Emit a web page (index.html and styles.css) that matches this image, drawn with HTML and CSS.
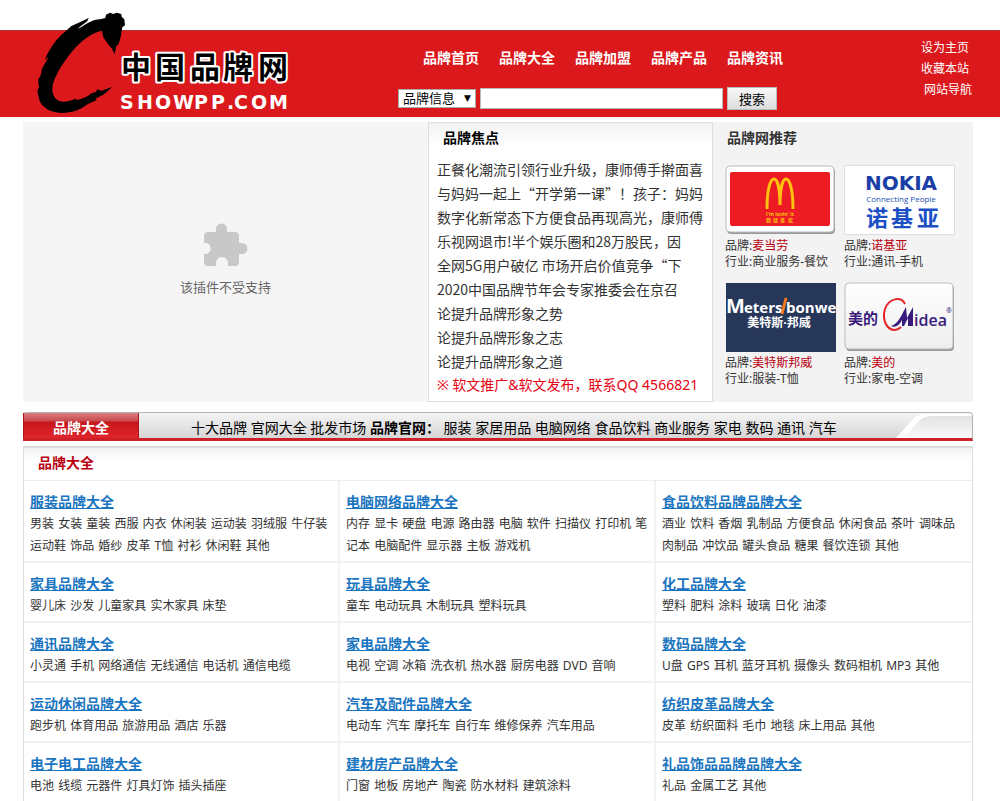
FILE: index.html
```html
<!DOCTYPE html>
<html lang="zh-CN">
<head>
    <meta charset="UTF-8">
    <meta name="viewport" content="width=device-width, initial-scale=1.0">
    <title>中国品牌网</title>
    <link rel="stylesheet" href="styles.css">
</head>
<body>
    <header class="header">
        <a class="logo" href="#">
            <svg width="300" height="117" viewBox="0 0 300 117">
                <g transform="scale(.3333)">
                    <path d="M240 58 L256 54 L258 44 L270 38 L280 42 L290 38 L304 42 L305 50 L313 58 L315 76 L307 82 L302 112 L296 132 L289 138 L284 163 L276 146 L262 130 L250 112 L246 92 C215 98 184 122 158 152 C130 185 108 222 100 248 C93 272 98 292 116 302 C132 309 150 303 166 296 L172 300 C190 296 204 290 214 280 L228 276 L232 268 L244 272 L277 261 L250 284 L226 296 L230 300 L204 312 L186 324 C160 338 128 342 104 336 C80 331 64 316 58 300 L52 272 L57 262 L54 240 L62 226 L66 206 L86 170 L74 180 C86 150 104 124 126 103 L132 98 L154 78 L176 68 L206 54 L202 64 L172 86 L186 80 C204 68 222 58 240 58 Z"/>
                </g>
                <text class="logo-name" x="101 135 170 203 238" y="78">中国品牌网</text>
                <text class="logo-domain" x="100 117 135 153 174 191 207 214 231 249" y="109">SHOWPP.COM</text>
            </svg>
        </a>
        <div class="header-main">
            <nav class="nav">
                <a href="#">品牌首页</a>
                <a href="#">品牌大全</a>
                <a href="#">品牌加盟</a>
                <a href="#">品牌产品</a>
                <a href="#">品牌资讯</a>
            </nav>
            <form class="search">
                <span class="select-wrap">
                    <select aria-label="搜索类别">
                        <option>品牌信息</option>
                        <option>品牌产品</option>
                    </select>
                </span>
                <input type="text" aria-label="关键词">
                <button type="submit">搜索</button>
            </form>
        </div>
        <div class="quick">
            <a href="#">设为主页</a>
            <a href="#">收藏本站</a>
            <a href="#">&nbsp;网站导航</a>
        </div>
    </header>

    <main class="container">
        <div class="top">
            <div class="plugin">
                <svg width="44" height="44" viewBox="0 0 44 44">
                    <path fill="#c8c8c8" d="M4 9 H12 V6 a5.500 5.500 0 0 1 11 0 V9 H31 a4 4 0 0 1 4 4 V20 H38 a5 5 0 0 1 0 11 H35 V39 a4 4 0 0 1 -4 4 H24 V40 a6 6 0 0 0 -12 0 V43 H4 a4 4 0 0 1 -4 -4 V31 H3 a6 6 0 0 0 0 -11 H0 V13 a4 4 0 0 1 4 -4 Z"/>
                </svg>
                <p>该插件不受支持</p>
            </div>

            <section class="focus">
                <h2>品牌焦点</h2>
                <ul>
                    <li><a href="#">正餐化潮流引领行业升级，康师傅手擀面喜</a></li>
                    <li><a href="#">与妈妈一起上“开学第一课”！孩子：妈妈</a></li>
                    <li><a href="#">数字化新常态下方便食品再现高光，康师傅</a></li>
                    <li><a href="#">乐视网退市!半个娱乐圈和28万股民，因</a></li>
                    <li><a href="#">全网5G用户破亿 市场开启价值竞争“下</a></li>
                    <li><a href="#">2020中国品牌节年会专家推委会在京召</a></li>
                    <li><a href="#">论提升品牌形象之势</a></li>
                    <li><a href="#">论提升品牌形象之志</a></li>
                    <li><a href="#">论提升品牌形象之道</a></li>
                    <li class="contact"><a href="#">※ 软文推广&amp;软文发布，联系QQ 4566821</a></li>
                </ul>
            </section>

            <section class="recommend">
                <h2>品牌网推荐</h2>
                <div class="brands">
                    <div class="brand">
                        <svg width="111" height="70" viewBox="0 0 111 70">
                            <rect x="2" y="3" width="108" height="66" rx="4" fill="#999"/>
                            <rect x="1" y="1" width="108" height="66" rx="4" fill="#fff" stroke="#bbb"/>
                            <rect x="5" y="7" width="100" height="54" rx="2" fill="#ed1b24"/>
                            <path d="M42 44 C42 22 46 14 49 14 C52 14 55 22 55 40 C55 22 58 14 61 14 C64 14 68 22 68 44" fill="none" stroke="#ffc20e" stroke-width="3"/>
                            <text x="55" y="51" class="mc-slogan">I'm lovin' it</text>
                            <text x="41 48 55 63" y="57" class="mc-cn">我就喜欢</text>
                        </svg>
                        <p>品牌:<a href="#">麦当劳</a></p>
                        <p>行业:商业服务-餐饮</p>
                    </div>
                    <div class="brand">
                        <svg width="111" height="70" viewBox="0 0 111 70">
                            <rect x="0" y="0" width="111" height="70" fill="#fff" stroke="#ddd" stroke-width="2"/>
                            <text x="57" y="25" class="nokia">NOKIA</text>
                            <text x="57" y="37" class="nokia-en">Connecting People</text>
                            <text x="22 47 73" y="61" class="nokia-cn">诺基亚</text>
                        </svg>
                        <p>品牌:<a href="#">诺基亚</a></p>
                        <p>行业:通讯-手机</p>
                    </div>
                    <div class="brand">
                        <svg width="111" height="70" viewBox="0 0 111 70">
                            <rect x="1" y="1" width="110" height="69" fill="#27375a"/>
                            <text x="1" y="31" class="mb-big">M</text>
                            <text x="19" y="31" class="mb">eters</text>
                            <text x="61" y="31" class="mb">bonwe</text>
                            <path d="M57 32 L61 16" stroke="#f47b20" stroke-width="3"/>
                            <text x="54" y="45" class="mb-cn">美特斯·邦威</text>
                        </svg>
                        <p>品牌:<a href="#">美特斯邦威</a></p>
                        <p>行业:服装-T恤</p>
                    </div>
                    <div class="brand">
                        <svg width="111" height="70" viewBox="0 0 111 70">
                            <defs>
                                <linearGradient id="midea-bg" x2="0" y2="1">
                                    <stop offset="0" stop-color="#fff"/>
                                    <stop offset="1" stop-color="#eee"/>
                                </linearGradient>
                            </defs>
                            <rect x="2" y="3" width="108" height="66" rx="4" fill="#999"/>
                            <rect x="1" y="1" width="108" height="66" rx="4" fill="url(#midea-bg)" stroke="#bbb"/>
                            <text x="4" y="42" class="midea-cn">美的</text>
                            <path d="M61 22 C57 14 45 16 41 27 C38 37 42 48 51 48 C54 48 56 46 57 45" fill="none" stroke="#e4262c" stroke-width="2"/>
                            <path d="M47 44 C54 42 57 34 62 25 L63 36 L69 25 V44 H64 L64 36 L60 44 L58 44 L58 38 C55 44 51 46 47 44 Z" fill="#3a1a7c"/>
                            <text x="70" y="44" class="midea">idea</text>
                            <text x="102" y="31" class="midea-r">®</text>
                        </svg>
                        <p>品牌:<a href="#">美的</a></p>
                        <p>行业:家电-空调</p>
                    </div>
                </div>
            </section>
        </div>

        <div class="tabbar">
            <a class="tab" href="#">品牌大全</a>
            <div class="tab-links">
                <a href="#">十大品牌</a>
                <a href="#">官网大全</a>
                <a href="#">批发市场</a>
                <b>品牌官网：</b>
                <a href="#">服装</a>
                <a href="#">家居用品</a>
                <a href="#">电脑网络</a>
                <a href="#">食品饮料</a>
                <a href="#">商业服务</a>
                <a href="#">家电</a>
                <a href="#">数码</a>
                <a href="#">通讯</a>
                <a href="#">汽车</a>
            </div>
            <svg class="swoosh" width="76" height="25" viewBox="0 0 76 25">
                <defs>
                    <linearGradient id="swoosh-bg" x2="0" y2="1">
                        <stop offset="0" stop-color="#e2e2e2"/>
                        <stop offset="1" stop-color="#fafafa"/>
                    </linearGradient>
                </defs>
                <path d="M0 25 L18 5 Q22 1 30 1 H76 V25 Z" fill="#fff"/>
                <path d="M8 25 L24 7 Q28 3 36 3 H76 V25 Z" fill="url(#swoosh-bg)"/>
            </svg>
        </div>

        <section class="directory">
            <h2>品牌大全</h2>
            <div class="cells">
                <div class="cell">
                    <h3><a href="#">服装品牌大全</a></h3>
                    <p><a href="#">男装</a> <a href="#">女装</a> <a href="#">童装</a> <a href="#">西服</a> <a href="#">内衣</a> <a href="#">休闲装</a> <a href="#">运动装</a> <a href="#">羽绒服</a> <a href="#">牛仔装</a> <a href="#">运动鞋</a> <a href="#">饰品</a> <a href="#">婚纱</a> <a href="#">皮革</a> <a href="#">T恤</a> <a href="#">衬衫</a> <a href="#">休闲鞋</a> <a href="#">其他</a></p>
                </div>
                <div class="cell">
                    <h3><a href="#">电脑网络品牌大全</a></h3>
                    <p><a href="#">内存</a> <a href="#">显卡</a> <a href="#">硬盘</a> <a href="#">电源</a> <a href="#">路由器</a> <a href="#">电脑</a> <a href="#">软件</a> <a href="#">扫描仪</a> <a href="#">打印机</a> <a href="#">笔记本</a> <a href="#">电脑配件</a> <a href="#">显示器</a> <a href="#">主板</a> <a href="#">游戏机</a></p>
                </div>
                <div class="cell">
                    <h3><a href="#">食品饮料品牌品牌大全</a></h3>
                    <p><a href="#">酒业</a> <a href="#">饮料</a> <a href="#">香烟</a> <a href="#">乳制品</a> <a href="#">方便食品</a> <a href="#">休闲食品</a> <a href="#">茶叶</a> <a href="#">调味品</a> <a href="#">肉制品</a> <a href="#">冲饮品</a> <a href="#">罐头食品</a> <a href="#">糖果</a> <a href="#">餐饮连锁</a> <a href="#">其他</a></p>
                </div>
                <div class="cell">
                    <h3><a href="#">家具品牌大全</a></h3>
                    <p><a href="#">婴儿床</a> <a href="#">沙发</a> <a href="#">儿童家具</a> <a href="#">实木家具</a> <a href="#">床垫</a></p>
                </div>
                <div class="cell">
                    <h3><a href="#">玩具品牌大全</a></h3>
                    <p><a href="#">童车</a> <a href="#">电动玩具</a> <a href="#">木制玩具</a> <a href="#">塑料玩具</a></p>
                </div>
                <div class="cell">
                    <h3><a href="#">化工品牌大全</a></h3>
                    <p><a href="#">塑料</a> <a href="#">肥料</a> <a href="#">涂料</a> <a href="#">玻璃</a> <a href="#">日化</a> <a href="#">油漆</a></p>
                </div>
                <div class="cell">
                    <h3><a href="#">通讯品牌大全</a></h3>
                    <p><a href="#">小灵通</a> <a href="#">手机</a> <a href="#">网络通信</a> <a href="#">无线通信</a> <a href="#">电话机</a> <a href="#">通信电缆</a></p>
                </div>
                <div class="cell">
                    <h3><a href="#">家电品牌大全</a></h3>
                    <p><a href="#">电视</a> <a href="#">空调</a> <a href="#">冰箱</a> <a href="#">洗衣机</a> <a href="#">热水器</a> <a href="#">厨房电器</a> <a href="#">DVD</a> <a href="#">音响</a></p>
                </div>
                <div class="cell">
                    <h3><a href="#">数码品牌大全</a></h3>
                    <p><a href="#">U盘</a> <a href="#">GPS</a> <a href="#">耳机</a> <a href="#">蓝牙耳机</a> <a href="#">摄像头</a> <a href="#">数码相机</a> <a href="#">MP3</a> <a href="#">其他</a></p>
                </div>
                <div class="cell">
                    <h3><a href="#">运动休闲品牌大全</a></h3>
                    <p><a href="#">跑步机</a> <a href="#">体育用品</a> <a href="#">旅游用品</a> <a href="#">酒店</a> <a href="#">乐器</a></p>
                </div>
                <div class="cell">
                    <h3><a href="#">汽车及配件品牌大全</a></h3>
                    <p><a href="#">电动车</a> <a href="#">汽车</a> <a href="#">摩托车</a> <a href="#">自行车</a> <a href="#">维修保养</a> <a href="#">汽车用品</a></p>
                </div>
                <div class="cell">
                    <h3><a href="#">纺织皮革品牌大全</a></h3>
                    <p><a href="#">皮革</a> <a href="#">纺织面料</a> <a href="#">毛巾</a> <a href="#">地毯</a> <a href="#">床上用品</a> <a href="#">其他</a></p>
                </div>
                <div class="cell">
                    <h3><a href="#">电子电工品牌大全</a></h3>
                    <p><a href="#">电池</a> <a href="#">线缆</a> <a href="#">元器件</a> <a href="#">灯具灯饰</a> <a href="#">插头插座</a></p>
                </div>
                <div class="cell">
                    <h3><a href="#">建材房产品牌大全</a></h3>
                    <p><a href="#">门窗</a> <a href="#">地板</a> <a href="#">房地产</a> <a href="#">陶瓷</a> <a href="#">防水材料</a> <a href="#">建筑涂料</a></p>
                </div>
                <div class="cell">
                    <h3><a href="#">礼品饰品品牌品牌大全</a></h3>
                    <p><a href="#">礼品</a> <a href="#">金属工艺</a> <a href="#">其他</a></p>
                </div>
            </div>
        </section>
    </main>
</body>
</html>
```

FILE: styles.css
```css
* {
    box-sizing: border-box;
}
body {
    margin: 0;
    background: #fff;
    color: #333;
    font-family: "Noto Sans", "Noto Sans CJK SC", sans-serif;
    font-size: 12px;
}
h2, h3, p, ul {
    margin: 0;
    padding: 0;
}
ul {
    list-style: none;
}
a {
    color: inherit;
    text-decoration: none;
}
svg {
    display: block;
}

/* header */
.header {
    display: flex;
    padding: 0 28px 0 20px;
    background: linear-gradient(#fff 30px, #a33 30px, #a33 31px, #db181b 31px);
    color: #fff;
}
.logo-name {
    font-family: "Noto Sans CJK SC", sans-serif;
    font-size: 30px;
    font-weight: bold;
    fill: #000;
    stroke: #fff;
    stroke-width: 4px;
    stroke-linejoin: round;
    paint-order: stroke;
}
.logo-domain {
    font-family: "DejaVu Sans", sans-serif;
    font-size: 19px;
    font-weight: bold;
    fill: #fff;
}
.header-main {
    margin-left: 78px;
    padding-top: 48px;
}
.nav {
    display: flex;
    gap: 20px;
    padding-left: 25px;
    font-size: 14px;
    font-weight: bold;
    line-height: 20px;
}
.search {
    display: flex;
    align-items: center;
    gap: 4px;
    margin-top: 19px;
}
.select-wrap {
    position: relative;
}
.select-wrap::after {
    content: "▼";
    position: absolute;
    top: 4px;
    right: 5px;
    color: #000;
    font-family: "DejaVu Sans", sans-serif;
    font-size: 9px;
    line-height: 10px;
    pointer-events: none;
}
.search select {
    display: block;
    appearance: none;
    width: 78px;
    height: 19px;
    padding: 0 4px;
    border: 1px solid #aaa;
    border-radius: 0;
    background: #fff;
    color: #000;
    font-family: inherit;
    font-size: 13px;
    line-height: 17px;
}
.search input {
    width: 243px;
    height: 21px;
    border: 1px solid #bbb;
    background: #fff;
}
.search button {
    width: 50px;
    height: 23px;
    padding: 0;
    border: 1px solid #bbb;
    background: linear-gradient(#f8f8f8, #ddd);
    color: #000;
    font-family: inherit;
    font-size: 13px;
    line-height: 20px;
}
.quick {
    display: flex;
    flex-direction: column;
    margin-left: auto;
    padding-top: 37px;
    line-height: 21px;
}

/* top blocks */
.container {
    margin: 5px 27px 0 23px;
}
.top {
    display: flex;
    background: #f3f3f3;
}
.plugin {
    flex: 1;
    display: flex;
    flex-direction: column;
    align-items: center;
    justify-content: center;
    gap: 10px;
    padding-bottom: 5px;
    background: #f5f5f5;
    color: #666;
    font-size: 13px;
    line-height: 20px;
}
.focus {
    width: 285px;
    padding: 5px 0 4px 8px;
    border: 1px solid #ddd;
    background: linear-gradient(#f2f2f2, #fff 22px);
}
.focus h2 {
    padding-left: 6px;
    color: #000;
    font-size: 14px;
    line-height: 20px;
}
.focus ul {
    margin-top: 9px;
    font-family: "Noto Sans CJK SC", sans-serif;
    font-size: 14px;
    line-height: 24px;
    white-space: nowrap;
}
.focus .contact {
    color: #e60012;
    font-family: "Noto Sans", "Noto Sans CJK SC", sans-serif;
}
.recommend {
    width: 260px;
    padding: 6px 12px;
}
.recommend h2 {
    padding-left: 2px;
    font-size: 14px;
    line-height: 20px;
}
.brands {
    display: grid;
    grid-template-columns: 111px 111px;
    gap: 12px 8px;
    margin-top: 17px;
}
.brand {
    line-height: 16px;
}
.brand svg {
    margin-bottom: 3px;
}
.brand a {
    color: #b8000f;
}
.mc-slogan, .mc-cn {
    fill: #ffc20e;
    font-weight: bold;
}
.mc-slogan {
    font-family: "Open Sans", sans-serif;
    font-size: 5px;
    text-anchor: middle;
}
.mc-cn {
    font-size: 5px;
}
.nokia {
    font-family: "DejaVu Sans", sans-serif;
    font-size: 20px;
    font-weight: bold;
    fill: #1b3fa6;
    text-anchor: middle;
}
.nokia-en {
    font-family: "Open Sans", sans-serif;
    font-size: 8px;
    fill: #1b4fb6;
    text-anchor: middle;
}
.nokia-cn {
    font-size: 22px;
    font-weight: bold;
    fill: #1b4fc6;
}
.mb, .mb-big {
    font-family: "Open Sans", sans-serif;
    font-weight: bold;
    font-size: 15px;
    fill: #fff;
}
.mb-big {
    font-size: 20px;
}
.mb-cn {
    font-size: 12px;
    font-weight: bold;
    fill: #fff;
    text-anchor: middle;
}
.midea-cn {
    font-size: 15px;
    font-weight: bold;
    fill: #3a1a7c;
}
.midea {
    font-family: "Open Sans", sans-serif;
    font-size: 16px;
    font-weight: 600;
    fill: #3a1a7c;
}
.midea-r {
    font-size: 7px;
    fill: #3a1a7c;
}

/* tab bar */
.tabbar {
    display: flex;
    margin-top: 10px;
    border-top: 1px solid #b4b4b4;
    border-right: 1px solid #b4b4b4;
    border-bottom: 3px solid #cf2027;
    border-radius: 3px 4px 0 0;
    background: linear-gradient(#f4f4f4, #d6d6d6);
    color: #000;
    font-size: 14px;
}
.tab {
    width: 116px;
    padding-top: 4px;
    border: 1px solid #a8161c;
    border-width: 0 1px;
    background: linear-gradient(#d98080, #c9494d 8px, #c4161c 9px, #e0262c);
    color: #fff;
    font-weight: bold;
    line-height: 21px;
    text-align: center;
}
.tab-links {
    flex: 1;
    padding: 4px 0 0 52px;
    line-height: 21px;
    white-space: nowrap;
}

/* directory */
.directory {
    margin-top: 5px;
    border: 1px solid #ddd;
    border-top-width: 2px;
}
.directory h2 {
    padding: 5px 14px 7px;
    border-bottom: 1px solid #eee;
    background: linear-gradient(#f1f1f1, #fff 12px);
    color: #b8000f;
    font-size: 14px;
    line-height: 20px;
}
.cells {
    display: grid;
    grid-template-columns: repeat(3, 1fr);
}
.cell {
    padding: 10px 6px 4px;
    border-right: 2px solid #f2f2f2;
    border-bottom: 2px solid #f2f2f2;
    line-height: 22px;
}
.cell:nth-child(3n) {
    border-right: 0;
}
.cell h3 {
    font-size: 14px;
}
.cell h3 a {
    color: #1a75c0;
    text-decoration: underline;
}
.cell p a {
    margin-right: 1px;
}
```
